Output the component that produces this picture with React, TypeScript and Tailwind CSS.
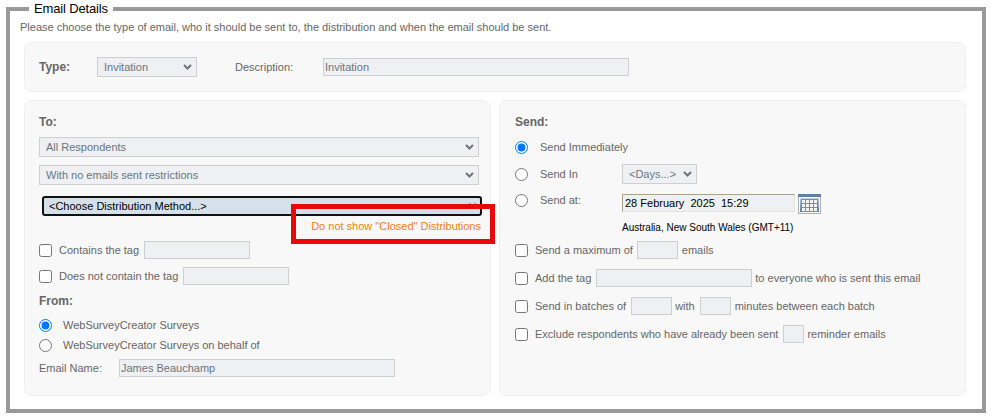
import { ReactNode } from "react";

const inputCls = "h-[18px] bg-[#eef0f3] border border-[#cfcfcf] px-[1px] text-[11px] text-[#6c757d] leading-none";

function Chevron({ color }: { color: string }) {
  return (
    <svg width="9" height="6" viewBox="0 0 9 6" className="absolute right-[5px] top-[7px] pointer-events-none">
      <path d="M1 1l3.5 3.5L8 1" stroke={color} strokeWidth="2" fill="none" />
    </svg>
  );
}

function Sel({ value, className }: { value: string; className: string }) {
  return (
    <div className={`relative ${className}`}>
      <select
        defaultValue={value}
        className="block w-full h-[20px] appearance-none bg-[#eef0f3] border border-[#cfcfcf] pl-[6px] text-[11px] text-[#6c757d]"
      >
        <option>{value}</option>
      </select>
      <Chevron color="#6c757d" />
    </div>
  );
}

function Box({ className }: { className: string }) {
  return <input type="text" readOnly className={`${inputCls} ${className}`} />;
}

function Row({ children, className = "" }: { children: ReactNode; className?: string }) {
  return <div className={`flex items-center h-[18px] ${className}`}>{children}</div>;
}

function Check() {
  return <input type="checkbox" readOnly className="w-[13px] h-[13px] m-0 shrink-0" />;
}

function Radio({ on = false }: { on?: boolean }) {
  return <input type="radio" checked={on} readOnly className="w-[13px] h-[13px] m-0 shrink-0" />;
}

function CalendarIcon() {
  return (
    <svg width="23" height="20" viewBox="0 0 23 20" className="block ml-[3px] mt-[8px]">
      <defs>
        <linearGradient id="cal" x1="0" y1="0" x2="0" y2="1">
          <stop offset="0" stopColor="#c3d6ec" />
          <stop offset="1" stopColor="#4f74ad" />
        </linearGradient>
      </defs>
      <rect x="0.5" y="0.5" width="22" height="19" fill="#f7f7f7" stroke="#b0b0b0" />
      <rect x="0" y="0" width="23" height="3" fill="#5f7da9" />
      <rect x="2" y="4" width="19" height="14" fill="url(#cal)" />
      <rect x="4" y="5" width="15" height="12" fill="#f4f4f4" />
      <path d="M3.5 5v13M7.5 5v13M11.5 5v13M15.5 5v13M19.5 5v13M3 5.5h17M3 9.5h17M3 13.5h17M3 17.5h17" stroke="#8a8a8a" strokeWidth="1" fill="none" />
    </svg>
  );
}

export default function App() {
  return (
    <div className="w-[991px] h-[420px] bg-white overflow-hidden px-[6px] pt-[1px] text-[11px] text-[#666666] font-['Liberation_Sans',Arial,sans-serif]">
      <fieldset className="relative w-[980px] h-[412px] border-4 border-[#999999] px-[10px]">
        <legend className="ml-[9px] px-[5px] text-[13px] leading-[16px] tracking-[-0.15px] text-black">Email Details</legend>

        <p className="mt-[3px] h-[15px] leading-[15px]">
          Please choose the type of email, who it should be sent to, the distribution and when the email should be sent.
        </p>

        <div className="mt-[7px] ml-[4px] w-[942px] h-[50px] rounded-[8px] border border-[#f0f0f0] bg-[#f8f8f8] flex items-center pl-[14px]">
          <b className="w-[58px] text-[12px]">Type:</b>
          <Sel value="Invitation" className="w-[100px]" />
          <span className="ml-[38px] w-[88px]">Description:</span>
          <input type="text" readOnly value="Invitation" className={`${inputCls} w-[306px]`} />
        </div>

        <div className="mt-[8px] ml-[4px] flex gap-[8px]">
          <section className="w-[467px] h-[296px] rounded-[8px] border border-[#f0f0f0] bg-[#f8f8f8] pl-[14px] pt-[14px]">
            <b className="block h-[14px] leading-[14px] text-[12px]">To:</b>
            <Sel value="All Respondents" className="mt-[8px] w-[440px]" />
            <Sel value="With no emails sent restrictions" className="mt-[8px] w-[440px]" />
            <div className="relative mt-[11px] ml-[3px] w-[440px]">
              <select className="block w-full h-[20px] appearance-none rounded-[3px] border-2 border-[#111111] bg-[#d6e0ea] text-[11px] text-black pl-[5px]">
                <option>{"<Choose Distribution Method...>"}</option>
              </select>
              <Chevron color="#111111" />
            </div>
            <p className="mt-[3px] mr-[9px] text-right text-[#f5820d] h-[14px] leading-[14px]">Do not show "Closed" Distributions</p>

            <Row className="mt-[8px]">
              <Check />
              <span className="ml-[7px]">Contains the tag</span>
              <Box className="ml-[5px] w-[106px]" />
            </Row>
            <Row className="mt-[8px]">
              <Check />
              <span className="ml-[7px]">Does not contain the tag</span>
              <Box className="ml-[5px] w-[106px]" />
            </Row>
            <b className="block mt-[9px] h-[14px] leading-[14px] text-[12px]">From:</b>
            <Row className="mt-[8px]">
              <Radio on />
              <span className="ml-[11px]">WebSurveyCreator Surveys</span>
            </Row>
            <Row className="mt-[2px]">
              <Radio />
              <span className="ml-[11px]">WebSurveyCreator Surveys on behalf of</span>
            </Row>
            <Row className="mt-[5px]">
              <span className="w-[80px]">Email Name:</span>
              <input type="text" readOnly value="James Beauchamp" className={`${inputCls} w-[276px]`} />
            </Row>
          </section>

          <section className="w-[467px] h-[296px] rounded-[8px] border border-[#f0f0f0] bg-[#f8f8f8] pl-[15px] pt-[14px]">
            <b className="block h-[14px] leading-[14px] text-[12px]">Send:</b>
            <Row className="mt-[9px]">
              <Radio on />
              <span className="ml-[12px]">Send Immediately</span>
            </Row>
            <Row className="mt-[9px]">
              <Radio />
              <span className="ml-[12px] w-[82px]">Send In</span>
              <Sel value="<Days...>" className="w-[75px]" />
            </Row>
            <Row className="mt-[8px]">
              <Radio />
              <span className="ml-[12px] w-[82px]">Send at:</span>
              <input type="text" readOnly value="28 February  2025  15:29" className="mt-[6px] w-[173px] h-[18px] bg-[#eef0f3] border border-[#a9a38c] border-r-[#e4e4da] border-b-[#e4e4da] px-[2px] text-[11px] text-black" />
              <CalendarIcon />
            </Row>
            <p className="mt-[12px] ml-[107px] text-[10px] leading-[13px] text-black">Australia, New South Wales (GMT+11)</p>

            <Row className="mt-[7px]">
              <Check />
              <span className="ml-[7px]">Send a maximum of</span>
              <Box className="ml-[4px] w-[41px]" />
              <span className="ml-[4px]">emails</span>
            </Row>
            <Row className="mt-[10px]">
              <Check />
              <span className="ml-[7px]">Add the tag</span>
              <Box className="ml-[5px] w-[156px]" />
              <span className="ml-[3px]">to everyone who is sent this email</span>
            </Row>
            <Row className="mt-[10px]">
              <Check />
              <span className="ml-[7px]">Send in batches of</span>
              <Box className="ml-[5px] w-[41px]" />
              <span className="ml-[3px]">with</span>
              <Box className="ml-[5px] w-[31px]" />
              <span className="ml-[4px]">minutes between each batch</span>
            </Row>
            <Row className="mt-[10px]">
              <Check />
              <span className="ml-[7px]">Exclude respondents who have already been sent</span>
              <Box className="ml-[5px] w-[21px]" />
              <span className="ml-[3px]">reminder emails</span>
            </Row>
          </section>
        </div>

        {/* red highlight drawn over the distribution row */}
        <div className="absolute left-[281px] top-[187px] w-[204px] h-[40px] border-[5px] border-[#e80808]" />
      </fieldset>
    </div>
  );
}
